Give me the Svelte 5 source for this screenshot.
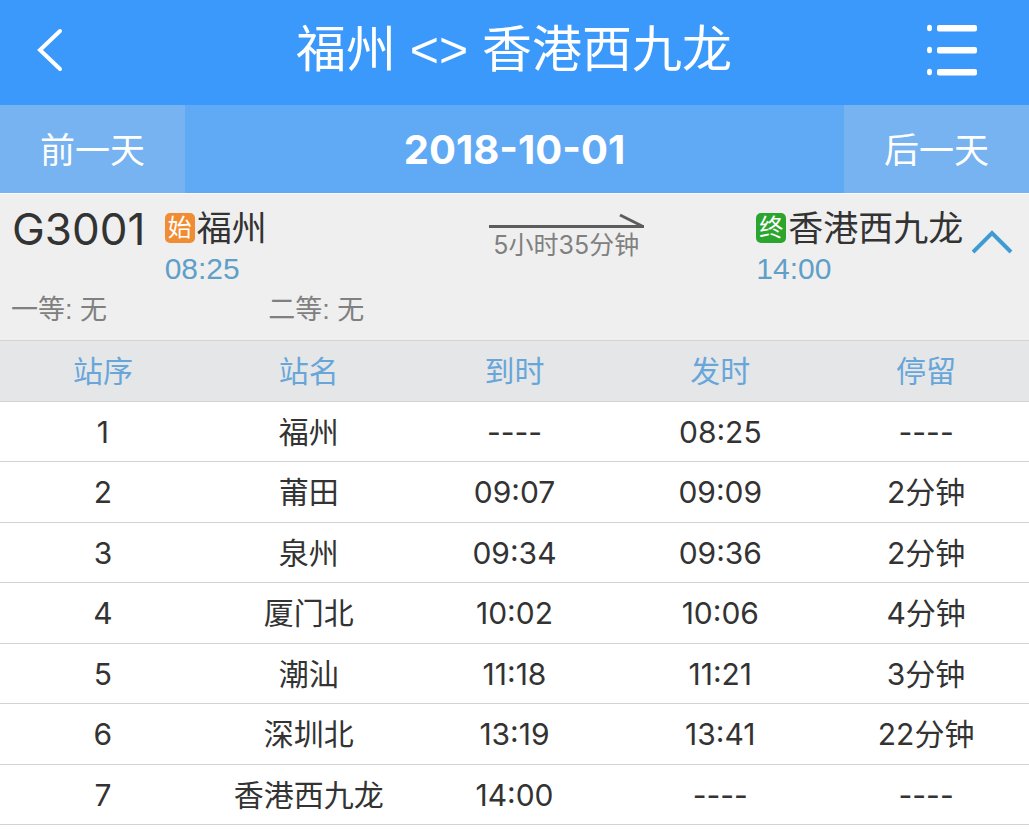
<script lang="ts">

  type Stop = { name: string; arrive?: string; depart?: string; stay?: string };

  const from  = "福州";
  const to    = "香港西九龙";
  const seats = ["一等", "二等"];

  const stops: Stop[] = [
    { name: "福州", depart: "08:25" },
    { name: "莆田", arrive: "09:07", depart: "09:09", stay: "2分钟" },
    { name: "泉州", arrive: "09:34", depart: "09:36", stay: "2分钟" },
    { name: "厦门北", arrive: "10:02", depart: "10:06", stay: "4分钟" },
    { name: "潮汕", arrive: "11:18", depart: "11:21", stay: "3分钟" },
    { name: "深圳北", arrive: "13:19", depart: "13:41", stay: "22分钟" },
    { name: "香港西九龙", arrive: "14:00" },
  ];

  let open = $state(true);

</script>

<header>
  <button class="back" aria-label="返回">
    <svg width="28" height="46" viewBox="0 0 28 46">
      <path d="M24 4 L4 23 L24 42" />
    </svg>
  </button>
  <h1>{from} &lt;&gt; {to}</h1>
  <button class="menu" aria-label="菜单">
    <svg width="52" height="52" viewBox="0 0 52 52">
      {#each [1, 23, 45] as y}
        <ellipse cx="3.5" cy={y + 3} rx="2.5" ry="3.2" />
        <rect x="11" {y} width="40" height="6.4" rx="2" />
      {/each}
    </svg>
  </button>
</header>

<nav>
  <button>前一天</button>
  <strong>2018-10-01</strong>
  <button>后一天</button>
</nav>

<section class="train">
  <div class="trip">
    <div class="number">G3001</div>
    <div>
      <div class="station"><span class="badge start">始</span>{from}</div>
      <div class="time">08:25</div>
    </div>
    <div class="duration">
      <svg width="155" height="16" viewBox="0 0 155 16">
        <path d="M0 13.5 H155" />
        <path d="M131 2 L153 13" />
      </svg>
      <span>5小时35分钟</span>
    </div>
    <div>
      <div class="station"><span class="badge end">终</span>{to}</div>
      <div class="time">14:00</div>
    </div>
    <button class="toggle" class:closed={!open} aria-label="展开" aria-expanded={open} onclick={() => open = !open}>
      <svg width="42" height="24" viewBox="0 0 42 24">
        <path d="M1 22 L20 3 L39 22" />
      </svg>
    </button>
  </div>
  <div class="seats">
    {#each seats as seat}
      <span>{seat}: 无</span>
    {/each}
  </div>
</section>

{#if open}
  <table>
    <thead>
      <tr>
        <th>站序</th>
        <th>站名</th>
        <th>到时</th>
        <th>发时</th>
        <th>停留</th>
      </tr>
    </thead>
    <tbody>
      {#each stops as stop, i}
        <tr>
          <td>{i + 1}</td>
          <td>{stop.name}</td>
          <td>{stop.arrive ?? "----"}</td>
          <td>{stop.depart ?? "----"}</td>
          <td>{stop.stay ?? "----"}</td>
        </tr>
      {/each}
    </tbody>
  </table>
{/if}

<style>
    :global(body) {
        margin: 0;
        background: #fff;
        color: #333;
        font-family: Inter, "Noto Sans CJK SC", sans-serif;
        font-weight: 390;
    }

    button {
        border: 0;
        padding: 0;
        background: none;
        color: inherit;
        font: inherit;
        cursor: pointer;
    }

    svg {
        display: block;
        fill: none;
    }

    header {
        display: flex;
        align-items: center;
        height: 105px;
        padding: 0 51px 6px 36px;
        box-sizing: border-box;
        background: #3b99fc;
        color: #fff;
    }

    h1 {
        flex: 1;
        margin: 0;
        font-family: "Liberation Sans", "Noto Sans CJK SC", sans-serif;
        font-size: 50px;
        line-height: 96px;
        font-weight: 390;
        text-align: center;
    }

    .back {
        width: 66px;
    }

    .back path {
        stroke: #fff;
        stroke-width: 4;
        stroke-linecap: round;
    }

    .menu svg {
        fill: #fff;
    }

    nav {
        display: flex;
        height: 88px;
        border-bottom: 1px solid #f8fafc;
        background: #60a9f5;
        color: #fff;
        line-height: 90px;
        text-align: center;
    }

    nav button {
        width: 18%;
        background: #77b2f1;
        font-size: 35px;
    }

    nav strong {
        flex: 1;
        font-size: 40px;
        font-weight: 700;
    }

    .train {
        background: #efefef;
    }

    .trip {
        display: grid;
        grid-template-columns: 32fr 63fr 52fr 42fr 11fr;
        padding-top: 12px;
        white-space: nowrap;
    }

    .trip > * {
        min-width: 0;
    }

    .number {
        padding-left: 12px;
        font-size: 44px;
        line-height: 46px;
    }

    .station {
        display: flex;
        align-items: center;
        gap: 2px;
        font-size: 35px;
        line-height: 44px;
    }

    .badge {
        width: 30px;
        height: 30px;
        border-radius: 5px;
        color: #fff;
        font-size: 24px;
        line-height: 30px;
        text-align: center;
    }

    .start {
        background: #f08c33;
    }

    .end {
        background: #2ca52f;
    }

    .time {
        color: #5f9fc8;
        font-family: "Liberation Sans", sans-serif;
        font-size: 30px;
        line-height: 38px;
    }

    .duration {
        width: 155px;
        padding-top: 7px;
        color: #808080;
        font-size: 25px;
        line-height: 32px;
        text-align: center;
    }

    .duration path {
        stroke: #5c5c5c;
        stroke-width: 3;
    }

    .toggle {
        justify-self: start;
        align-self: start;
        padding-top: 24px;
    }

    .toggle path {
        stroke: #3f9bd3;
        stroke-width: 4;
    }

    .closed svg {
        transform: rotate(180deg);
    }

    .seats {
        display: grid;
        grid-template-columns: repeat(4, 1fr);
        padding-bottom: 8px;
        color: #808080;
        font-family: "Liberation Sans", "Noto Sans CJK SC", sans-serif;
        font-size: 27px;
        line-height: 44px;
    }

    .seats span {
        padding-left: 11px;
    }

    table {
        width: 100%;
        table-layout: fixed;
        border-collapse: separate;
        border-spacing: 0;
        font-size: 30px;
        line-height: 40px;
        text-align: center;
    }

    th,
    td {
        box-sizing: border-box;
        height: 60px;
        padding: 0;
        border-bottom: 1px solid #d3d3d3;
    }

    tr:nth-child(even) td {
        height: 61px;
    }

    th {
        height: 62px;
        border-top: 1px solid #d3d3d3;
        background: #e4e6e8;
        color: #68a6da;
        font-weight: 390;
    }
</style>
